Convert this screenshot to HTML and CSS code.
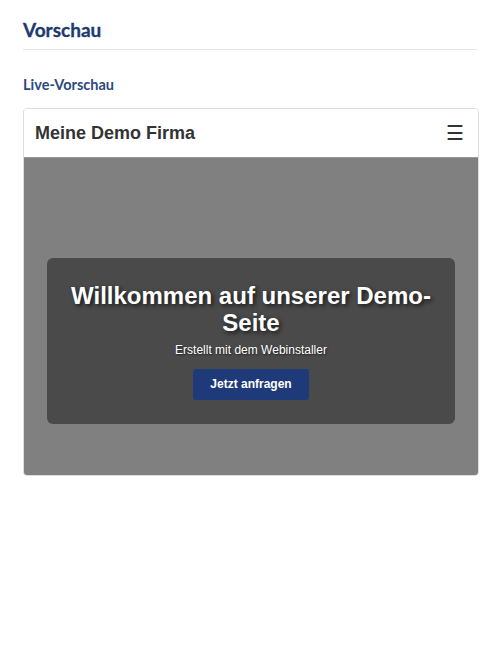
FILE: index.html
```html
<!DOCTYPE html>
<html lang="de">
<head>
<meta charset="utf-8">
<title>Vorschau</title>
<link rel="stylesheet" href="styles.css">
</head>
<body>
<div class="page">
  <h1 class="page-title">Vorschau</h1>
  <h2 class="section-title">Live-Vorschau</h2>
  <div class="preview">
    <div class="preview-header">
      <span class="brand">Meine Demo Firma</span>
      <span class="menu">&#9776;</span>
    </div>
    <div class="hero">
      <div class="hero-box">
        <h3 class="hero-title">Willkommen auf unserer Demo-Seite</h3>
        <p class="hero-sub">Erstellt mit dem Webinstaller</p>
        <a class="hero-btn">Jetzt anfragen</a>
      </div>
    </div>
  </div>
</div>
</body>
</html>
```
FILE: styles.css
```css
html, body {
  margin: 0;
  padding: 0;
  background: #ffffff;
}
.page {
  padding: 16px 23px;
  font-family: Lato, "Open Sans", sans-serif;
}
.page-title {
  margin: 0;
  font-size: 19px;
  font-weight: 700;
  color: #1c3a6e;
  line-height: 28px;
  padding-bottom: 5px;
  border-bottom: 1px solid #e6e6e6;
  -webkit-text-stroke: 0.3px #1c3a6e;
}
.section-title {
  margin: 25px 0 13px 0;
  font-size: 14.5px;
  font-weight: 700;
  color: #2b4a80;
  line-height: 20px;
}
.preview {
  margin-right: -2px;
  border: 1px solid #dddddd;
  border-radius: 4px;
  overflow: hidden;
  font-family: "Liberation Sans", Arial, sans-serif;
}
.preview-header {
  display: flex;
  align-items: center;
  justify-content: space-between;
  height: 48px;
  padding: 0 14px 0 11px;
  background: #ffffff;
  border-bottom: 1px solid #999999;
}
.brand {
  font-size: 18px;
  font-weight: 700;
  color: #333333;
}
.menu {
  font-size: 20px;
  color: #333333;
}
.hero {
  background: #808080;
  padding: 100px 23px 51px;
}
.hero-box {
  background: #4a4a4a;
  border-radius: 6px;
  padding: 24px 20px 24px;
  text-align: center;
  color: #ffffff;
}
.hero-title {
  margin: 0;
  font-size: 24px;
  line-height: 27px;
  font-weight: 700;
  text-shadow: 2px 2px 4px rgba(0, 0, 0, 0.7);
}
.hero-sub {
  margin: 7px 0 11px;
  font-size: 12px;
  line-height: 15px;
  text-shadow: 1px 1px 2px rgba(0, 0, 0, 0.6);
}
.hero-btn {
  display: inline-block;
  background: #1e3a78;
  color: #ffffff;
  font-size: 12px;
  font-weight: 700;
  padding: 8px 17px;
  line-height: 15px;
  border-radius: 3px;
}
```
